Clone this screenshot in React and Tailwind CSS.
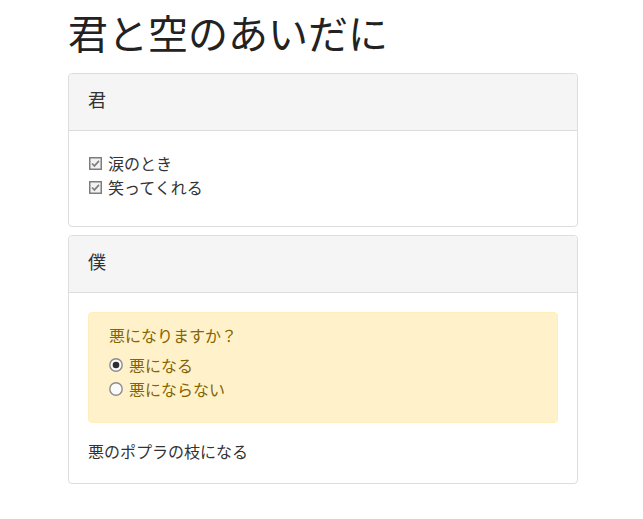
import React from "react";

function Check() {
  return (
    <svg width="13" height="13" viewBox="0 0 13 13" className="shrink-0">
      <rect x="0.75" y="0.75" width="11.5" height="11.5" fill="#f2f2f2" stroke="#7d7d7d" strokeWidth="1.5" />
      <path d="M3 6.5 L5.4 8.9 L10 3.9" fill="none" stroke="#808080" strokeWidth="1.7" />
    </svg>
  );
}

function Radio({ checked }) {
  return (
    <svg width="14" height="14" viewBox="0 0 14 14" className="shrink-0">
      <circle cx="7" cy="7" r="6.2" fill="#fafafa" stroke="#8c8c8c" strokeWidth="1.4" />
      {checked && <circle cx="7" cy="7" r="3.3" fill="#2e2e2e" />}
    </svg>
  );
}

export default function App() {
  const font = { fontFamily: '"Noto Sans CJK JP", "Noto Sans", sans-serif' };
  return (
    <div className="bg-white min-h-[519px] text-[#333]" style={font}>
      <div className="w-[510px] ml-[68px]">
        <h1 className="text-[40px] leading-[44px] pt-[10px] mb-[19px] font-normal text-[#222]">君と空のあいだに</h1>
        <div className="border border-[#ddd] rounded-[4px] mb-[8px]">
          <div className="bg-[#f5f5f5] border-b border-[#ddd] h-[57px] px-[19px] pb-[6px] flex items-center text-[18px] rounded-t-[4px]">君</div>
          <div className="px-[20px] pt-[20px] pb-[27px] text-[16px] leading-[24px]">
            <div className="flex items-center gap-[6px]"><Check /><span>涙のとき</span></div>
            <div className="flex items-center gap-[6px]"><Check /><span>笑ってくれる</span></div>
          </div>
        </div>
        <div className="border border-[#ddd] rounded-[4px]">
          <div className="bg-[#f5f5f5] border-b border-[#ddd] h-[57px] px-[19px] pb-[6px] flex items-center text-[18px] rounded-t-[4px]">僕</div>
          <div className="px-[19px] pt-[19px] pb-[20px] text-[16px] leading-[24px]">
            <div className="bg-[#fff2cb] border border-[#ffeeba] rounded-[4px] text-[#856404] px-[20px] pt-[10px] pb-[21px]">
              <div className="mb-[6px]">悪になりますか？</div>
              <div className="flex items-center gap-[6px]"><Radio checked /><span>悪になる</span></div>
              <div className="flex items-center gap-[6px]"><Radio /><span>悪にならない</span></div>
            </div>
            <div className="mt-[16px]">悪のポプラの枝になる</div>
          </div>
        </div>
      </div>
    </div>
  );
}
